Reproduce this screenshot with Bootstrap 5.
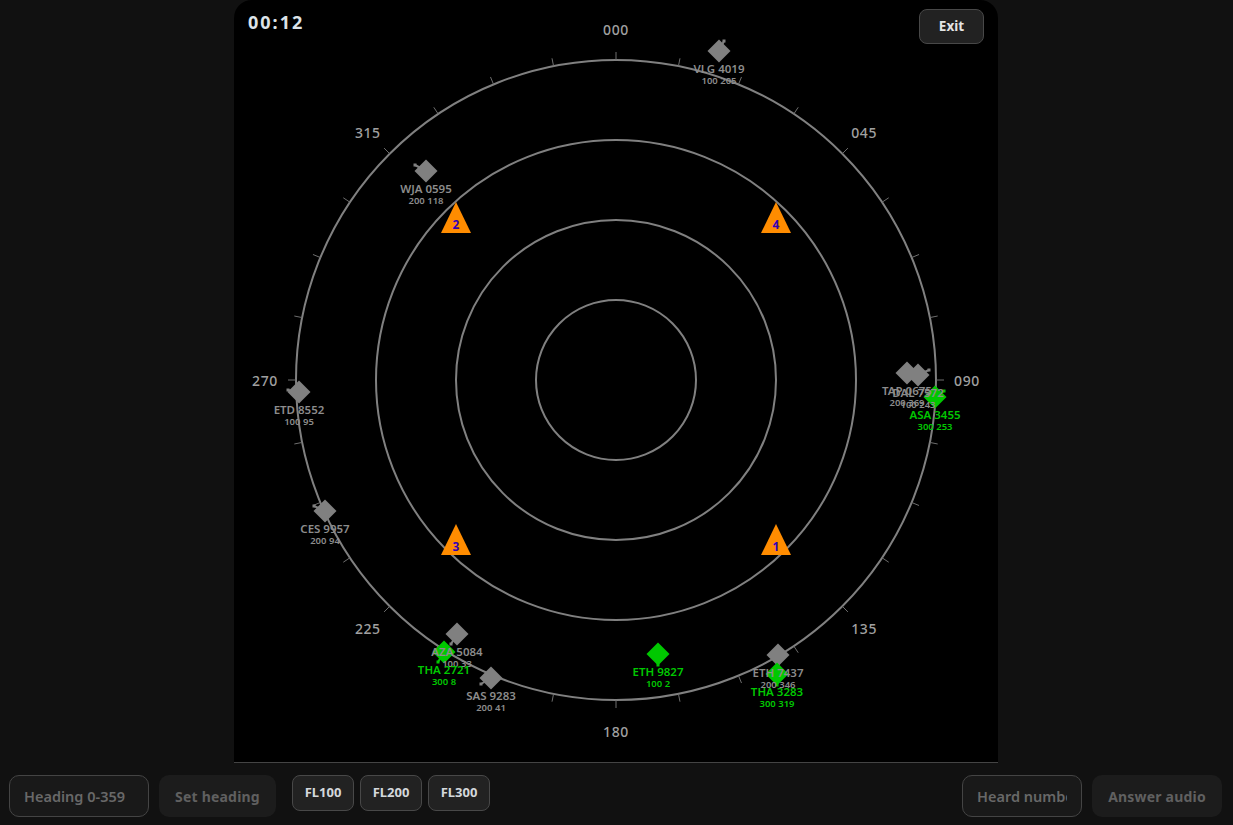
<!DOCTYPE html>
<html lang="en">
<head>
    <meta charset="UTF-8">
    <meta name="viewport" content="width=device-width, initial-scale=1.0">
    <title>Radar</title>
    <link href="https://cdn.jsdelivr.net/npm/bootstrap@5.3.0/dist/css/bootstrap.min.css" rel="stylesheet">
    <style>
        html, body {
            height: 100%;
            background: #111111;
            font-family: "Noto Sans", sans-serif;
            overflow: hidden;
        }

        .radar-stage {
            width: 764px;
            height: 763px;
            margin-left: 234px;
            background: #000;
            border-bottom: 1px solid #444;
            border-radius: 18px 18px 0 0;
        }

        .radar-svg { display: block; }
        .radar-timer {
            top: 9px;
            left: 14px;
            color: #dde3e8;
            font-size: 18px;
            font-weight: 700;
            letter-spacing: 2px;
            line-height: 26px;
        }
        .radar-exit {
            top: 9px;
            right: 14px;
            width: 65px;
            height: 35px;
        }

        .ctl-bar {
            height: 62px;
            padding: 12px 11px 0 9px;
        }
        .ctl-gap { gap: 10px; }
        .fl-gap { gap: 6px; margin-left: 6px; }

        .ctl-btn {
            background: #222;
            border: 1px solid #484848;
            border-radius: 8px;
            color: #e4e4e4;
            font-size: 13.5px;
            font-weight: 700;
            padding: 0;
        }
        .ctl-btn:hover { background: #222; color: #e4e4e4; border-color: #484848; }
        .ctl-fl { width: 62px; height: 36px; font-size: 13px; color: #d4d8dc; }

        .ctl-input {
            height: 42px;
            background: #191919;
            border: 1px solid #444;
            border-radius: 10px;
            color: #ddd;
            font-size: 14.5px;
            font-weight: 600;
            padding: 0 14px;
        }
        .ctl-input::placeholder { color: #686868; opacity: 1; }
        .w-heading { width: 140px; }
        .w-heard { width: 120px; }

        .ctl-off {
            height: 42px;
            background: #1c1c1c;
            border: 0;
            border-radius: 10px;
            font-size: 14px;
            font-weight: 700;
            letter-spacing: .2px;
            padding: 0;
        }
        .ctl-off:disabled { background: #1c1c1c; color: #606060; opacity: 1; }
        .w-set { width: 117px; }
        .w-answer { width: 130px; }

        .ring { fill: none; stroke: #808080; stroke-width: 2; }
        .tick { stroke: #6e6e6e; stroke-width: 1; }
        .bearing { fill: #a0a0a0; font-size: 14px; font-weight: 500; letter-spacing: .6px; text-anchor: middle; dominant-baseline: central; }
        .ac-name { font-size: 11.5px; font-weight: 600; text-anchor: middle; }
        .ac-data { font-size: 9.5px; font-weight: 600; text-anchor: middle; }
        .wp-num { fill: #3300b4; font-size: 12px; font-weight: 700; text-anchor: middle; }
    </style>
</head>
<body>
    <div class="d-flex flex-column h-100">
        <div class="radar-stage position-relative overflow-hidden">
            <svg id="radar" class="radar-svg" width="764" height="762" viewBox="234 0 764 762" xmlns="http://www.w3.org/2000/svg"></svg>
            <div class="radar-timer position-absolute">00:12</div>
            <button class="btn ctl-btn radar-exit position-absolute" type="button">Exit</button>
        </div>
        <div class="ctl-bar d-flex justify-content-between align-items-start">
            <div class="d-flex align-items-start ctl-gap">
                <input class="form-control ctl-input w-heading flex-shrink-0" type="text" placeholder="Heading 0-359">
                <button class="btn ctl-off w-set" type="button" disabled>Set heading</button>
                <div class="d-flex fl-gap">
                    <button class="btn ctl-btn ctl-fl" type="button">FL100</button>
                    <button class="btn ctl-btn ctl-fl" type="button">FL200</button>
                    <button class="btn ctl-btn ctl-fl" type="button">FL300</button>
                </div>
            </div>
            <div class="d-flex align-items-start ctl-gap">
                <input class="form-control ctl-input w-heard" type="text" placeholder="Heard number">
                <button class="btn ctl-off w-answer" type="button" disabled>Answer audio</button>
            </div>
        </div>
    </div>

    <script src="https://cdn.jsdelivr.net/npm/bootstrap@5.3.0/dist/js/bootstrap.bundle.min.js"></script>
    <script>
        const svg = document.getElementById("radar");
        const CX = 616, CY = 380;
        const GREY = "#808080", GREEN = "#00c800";

        // x, y, heading dot offset (dx, dy), callsign, data line, colour
        const aircraft = [
            [719, 51, 5, -10, "VLG 4019", "100 205", GREY],
            [426, 171, -11, -6, "WJA 0595", "200 118", GREY],
            [907, 373, 0, 0, "TAP 0675", "200 369", GREY],
            [918, 375, 11, -5, "DAL 7572", "100 243", GREY],
            [299, 392, -11, -2, "ETD 8552", "100 95", GREY],
            [325, 511, -11, -5, "CES 9957", "200 94", GREY],
            [457, 634, -6, 10, "AZA 5084", "100 33", GREY],
            [491, 678, -10, 6, "SAS 9283", "200 41", GREY],
            [778, 655, 0, 11, "ETH 7437", "200 346", GREY],
            [935, 397, 9, -6, "ASA 3455", "300 253", GREEN],
            [444, 652, -6, 10, "THA 2721", "300 8", GREEN],
            [658, 654, 0, 11, "ETH 9827", "100 2", GREEN],
            [777, 674, 0, 11, "THA 3283", "300 319", GREEN],
        ];
        const waypoints = [[776, 540, 1], [456, 218, 2], [456, 540, 3], [776, 218, 4]];

        let out = "";
        [80, 160, 240, 320].forEach(r => {
            out += `<circle class="ring" cx="${CX}" cy="${CY}" r="${r}"/>`;
        });

        // 32 ticks round the outer ring
        for (let i = 0; i < 32; i++) {
            const a = i * 11.25 * Math.PI / 180;
            const s = Math.sin(a), c = Math.cos(a);
            out += `<line class="tick" x1="${CX + 320 * s}" y1="${CY - 320 * c}" x2="${CX + 328 * s}" y2="${CY - 328 * c}"/>`;
        }

        // bearing labels
        ["000", "045", "090", "135", "180", "225", "270", "315"].forEach((t, i) => {
            const a = i * 45 * Math.PI / 180;
            out += `<text class="bearing" x="${CX + 351 * Math.sin(a)}" y="${CY + 0.5 - 351 * Math.cos(a)}">${t}</text>`;
        });

        waypoints.forEach(([x, y, n]) => {
            out += `<polygon points="${x},${y - 16} ${x + 15},${y + 15} ${x - 15},${y + 15}" fill="#ff8c00"/>`;
            out += `<text class="wp-num" x="${x}" y="${y + 11}">${n}</text>`;
        });

        // symbols first, labels on top of every symbol
        aircraft.forEach(([x, y, dx, dy, , , col]) => {
            if (dx || dy) {
                out += `<line x1="${x}" y1="${y}" x2="${x + dx}" y2="${y + dy}" stroke="${col}" stroke-width="2"/>`;
                out += `<rect x="${x + dx - 1.5}" y="${y + dy - 1.5}" width="3" height="3" fill="${col}"/>`;
            }
            out += `<polygon points="${x},${y - 11.5} ${x + 11.5},${y} ${x},${y + 11.5} ${x - 11.5},${y}" fill="${col}"/>`;
        });
        aircraft.forEach(([x, y, , , name, data, col]) => {
            const textCol = col === GREY ? "#8c8c8c" : col;
            out += `<text class="ac-name" x="${x}" y="${y + 22}" fill="${textCol}">${name}</text>`;
            out += `<text class="ac-data" x="${x}" y="${y + 32.5}" fill="${textCol}">${data}</text>`;
        });

        svg.innerHTML = out;
    </script>
</body>
</html>
